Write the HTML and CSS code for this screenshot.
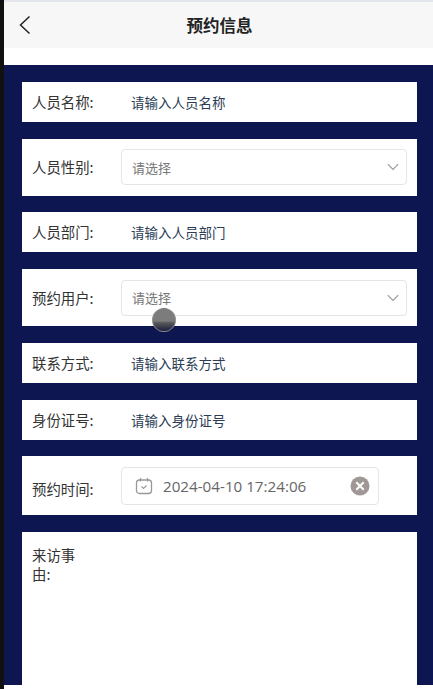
FILE: index.html
```html
<!DOCTYPE html>
<html lang="zh-CN">
<head>
    <meta charset="UTF-8">
    <meta name="viewport" content="width=device-width, initial-scale=1.0">
    <title>预约信息</title>
    <link rel="stylesheet" href="styles.css">
</head>
<body>
    <div class="page">
        <div class="nav-bar">
            <svg class="back-icon" width="14" height="20" viewBox="0 0 14 20"><path d="M11.5 1.5 2.5 10l9 8.500" fill="none" stroke="#222" stroke-width="1.500"/></svg>
            <h1>预约信息</h1>
        </div>

        <div class="form">
            <div class="row row-input">
                <span class="label">人员名称:</span>
                <span class="input-text">请输入人员名称</span>
            </div>
            <div class="row row-select">
                <span class="label">人员性别:</span>
                <div class="select">
                    <span>请选择</span>
                    <svg width="12" height="8" viewBox="0 0 12 8"><path d="M.8 1.200 6 6.400l5.200-5.200" fill="none" stroke="#999" stroke-width="1.100"/></svg>
                </div>
            </div>
            <div class="row row-input">
                <span class="label">人员部门:</span>
                <span class="input-text">请输入人员部门</span>
            </div>
            <div class="row row-select">
                <span class="label">预约用户:</span>
                <div class="select">
                    <span>请选择</span>
                    <svg width="12" height="8" viewBox="0 0 12 8"><path d="M.8 1.200 6 6.400l5.200-5.200" fill="none" stroke="#999" stroke-width="1.100"/></svg>
                </div>
                <div class="touch-dot"></div>
            </div>
            <div class="row row-input">
                <span class="label">联系方式:</span>
                <span class="input-text">请输入联系方式</span>
            </div>
            <div class="row row-input">
                <span class="label">身份证号:</span>
                <span class="input-text">请输入身份证号</span>
            </div>
            <div class="row row-date">
                <span class="label label-date">预约时间:</span>
                <div class="date-picker">
                    <svg class="calendar-icon" width="18" height="18" viewBox="0 0 18 18">
                        <rect x="1.500" y="3" width="15" height="13.500" rx="3" fill="none" stroke="#999" stroke-width="1.300"/>
                        <path d="M5.500 1v3.500M12.500 1v3.500" stroke="#999" stroke-width="1.300"/>
                        <path d="M6.500 9.500 8.500 11.500l3-3" fill="none" stroke="#999" stroke-width="1.100"/>
                    </svg>
                    <span class="date-value">2024-04-10 17:24:06</span>
                    <svg class="clear-icon" width="20" height="20" viewBox="0 0 20 20">
                        <circle cx="10" cy="10" r="9.500" fill="#a09896"/>
                        <path d="M6.300 6.300l7.400 7.400M13.700 6.300l-7.400 7.400" stroke="#fff" stroke-width="2"/>
                    </svg>
                </div>
            </div>
            <div class="row row-textarea">
                <span class="label label-wrap">来访事由:</span>
            </div>
        </div>
    </div>
</body>
</html>
```

FILE: styles.css
```css
html, body {
    height: 100%;
}
body {
    margin: 0;
    background: #fff;
    font-family: "Noto Sans CJK SC", "Noto Sans", sans-serif;
    color: #333;
    overflow: hidden;
}
.page {
    height: 689px;
    overflow: hidden;
    margin-left: 4px;
    border-top: 2px solid #e4e6ee;
    box-shadow: -4px 0 0 #111;
}
.nav-bar {
    height: 46px;
    background: #f7f7f7;
    display: flex;
    align-items: center;
    justify-content: center;
    position: relative;
}
.nav-bar h1 {
    margin: 0 0 0 2px;
    font-size: 16.500px;
    font-weight: 700;
    color: #222;
}
.back-icon {
    position: absolute;
    left: 14px;
    top: 13px;
}
.form {
    margin-top: 17px;
    background: #0d1650;
    padding: 17px 16px 0 18px;
    display: flex;
    flex-direction: column;
    gap: 16.800px;
    height: 620px;
    box-sizing: border-box;
}
.row {
    background: #fff;
    display: flex;
    align-items: center;
    padding-left: 10px;
    position: relative;
    flex: none;
}
.row-input {
    height: 40px;
}
.row-select {
    height: 56.800px;
    padding-right: 10px;
}
.row-date {
    height: 59px;
}
.row-textarea {
    height: 300px;
    align-items: flex-start;
    padding-top: 13px;
    box-sizing: border-box;
}
.label {
    width: 89px;
    flex: none;
    font-size: 14.400px;
    line-height: 20px;
    color: #333;
}
.label-date {
    position: relative;
    top: 3px;
}
.label-wrap {
    width: 48px;
    line-height: 19px;
}
.input-text {
    font-size: 13.500px;
    color: #2b3d55;
    padding-left: 10px;
}
.select {
    flex: 1;
    height: 36px;
    box-sizing: border-box;
    border: 1px solid #e5e5e5;
    border-radius: 4px;
    display: flex;
    align-items: center;
    justify-content: space-between;
    padding: 0 7px 0 10px;
    font-size: 13px;
    color: #777;
}
.date-picker {
    width: 258px;
    height: 38px;
    box-sizing: border-box;
    border: 1px solid #e5e5e5;
    border-radius: 4px;
    display: flex;
    align-items: center;
    padding: 0 8px 0 13px;
    color: #666;
}
.date-value {
    font-size: 15.200px;
    font-family: "Open Sans", "Noto Sans", sans-serif;
    margin-left: 10px;
    flex: 1;
}
.touch-dot {
    position: absolute;
    left: 130px;
    top: 39px;
    width: 22px;
    height: 22px;
    border-radius: 50%;
    background: linear-gradient(#7c7c7c 0 55%, #5a5a5a 62%, #1a1f3f 100%);
    border: 1px solid rgba(150, 150, 150, 0.7);
}
```
